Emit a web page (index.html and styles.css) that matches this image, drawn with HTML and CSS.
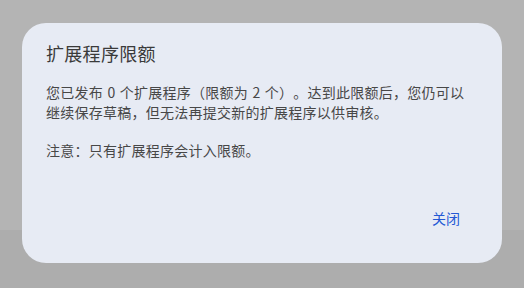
FILE: index.html
```html
<html lang="zh-CN">
<head>
<meta charset="utf-8">
<title>扩展程序限额</title>
<link rel="stylesheet" href="styles.css">
</head>
<body>

<div class="page">
  <div class="page-top"></div>
  <div class="page-bottom"></div>
</div>

<div class="dialog">
  <h2 class="dialog-title">扩展程序限额</h2>
  <div class="dialog-body">
    <p>您已发布 0 个扩展程序（限额为 2 个）。达到此限额后，您仍可以继续保存草稿，但无法再提交新的扩展程序以供审核。</p>
    <p>注意：只有扩展程序会计入限额。</p>
  </div>
  <div class="dialog-actions">
    <button class="btn-text">关闭</button>
  </div>
</div>

</body>
</html>
```

FILE: styles.css
```css
body {
  margin: 0;
  font-family: "Noto Sans CJK SC", "Noto Sans", sans-serif;
  background-color: #b3b3b3;
  text-spacing-trim: space-all;
}

.page {
  height: 288px;
  display: flex;
  flex-direction: column;
}

.page-top {
  height: 230px;
  background-color: #b4b4b4;
}

.page-bottom {
  flex: 1;
  background-color: #adadad;
}

.dialog {
  position: fixed;
  left: 22px;
  top: 23px;
  width: 480px;
  height: 240px;
  box-sizing: border-box;
  padding: 18px 24px 0 24px;
  background-color: #e7ebf4;
  border-radius: 24px;
  display: flex;
  flex-direction: column;
}

.dialog-title {
  margin: 0;
  font-size: 18px;
  line-height: 24px;
  font-weight: normal;
  letter-spacing: 0.3px;
  color: #3a3a3a;
}

.dialog-body {
  margin-top: 17px;
  padding-right: 8px;
  font-size: 14px;
  line-height: 20px;
  color: #474747;
  letter-spacing: 0.25px;
  word-spacing: 1px;
}

.dialog-body p {
  margin: 0 0 18px 0;
}

.dialog-actions {
  margin-top: auto;
  margin-bottom: 35px;
  display: flex;
  justify-content: flex-end;
}

.btn-text {
  border: none;
  background: none;
  padding: 0 18px 0 17px;
  font-family: inherit;
  font-size: 14px;
  line-height: 20px;
  color: #2458d4;
  text-spacing-trim: space-all;
}
```
